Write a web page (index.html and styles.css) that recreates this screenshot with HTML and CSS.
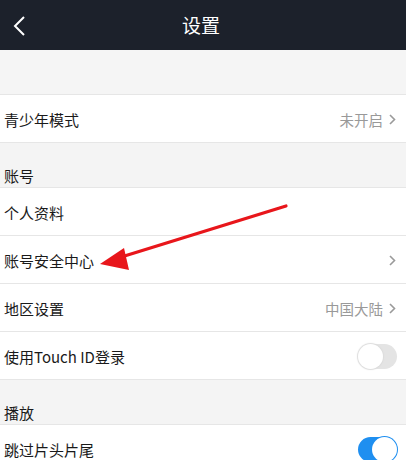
FILE: index.html
```html
<!DOCTYPE html>
<html lang="zh">
<head>
<meta charset="utf-8">
<link rel="stylesheet" href="styles.css">
</head>
<body>
<div class="screen">
  <header class="topbar">
    <svg class="back" width="14" height="22" viewBox="0 0 14 22"><path d="M11 2 L2 11 L11 20" fill="none" stroke="#fff" stroke-width="2"/></svg>
    <div class="title">设置</div>
  </header>
  <div class="spacer"></div>
  <div class="row"><span class="label">青少年模式</span><span class="value">未开启<svg class="chev" width="7" height="11" viewBox="0 0 7 11"><path d="M1 1 L5.5 5.5 L1 10" fill="none" stroke="#9a9a9a" stroke-width="1.6"/></svg></span></div>
  <div class="section">账号</div>
  <div class="row"><span class="label">个人资料</span></div>
  <div class="row"><span class="label">账号安全中心</span><span class="value"><svg class="chev" width="7" height="11" viewBox="0 0 7 11"><path d="M1 1 L5.5 5.5 L1 10" fill="none" stroke="#9a9a9a" stroke-width="1.6"/></svg></span></div>
  <div class="row"><span class="label">地区设置</span><span class="value">中国大陆<svg class="chev" width="7" height="11" viewBox="0 0 7 11"><path d="M1 1 L5.5 5.5 L1 10" fill="none" stroke="#9a9a9a" stroke-width="1.6"/></svg></span></div>
  <div class="row"><span class="label">使用Touch ID登录</span><span class="toggle"><span class="knob"></span></span></div>
  <div class="section">播放</div>
  <div class="row"><span class="label">跳过片头片尾</span><span class="toggle on"><span class="knob"></span></span></div>
  <svg class="arrow" width="406" height="460" viewBox="0 0 406 460">
    <line x1="286" y1="206" x2="118" y2="258" stroke="#e8161b" stroke-width="3.2" stroke-linecap="round"/>
    <polygon points="100,264 124,248 129,270" fill="#e8161b"/>
  </svg>
</div>
</body>
</html>
```
FILE: styles.css
```css
html, body { margin: 0; padding: 0; }
body {
  width: 406px; height: 460px; overflow: hidden;
  background: #f4f4f4;
  font-family: "Noto Sans CJK SC", "Noto Sans", sans-serif;
}
.screen { position: relative; width: 406px; height: 460px; overflow: hidden; }
.topbar {
  height: 50px; background: #1c212b; position: relative;
  display: flex; align-items: center; justify-content: center;
}
.back { position: absolute; left: 13px; top: 15px; }
.title { color: #fff; font-size: 19px; line-height: 24px; margin-right: 4px; }
.spacer { height: 44px; border-bottom: 1px solid #e6e6e6; background: #f5f5f5; }
.row {
  height: 48px; background: #fff; border-bottom: 1px solid #e6e6e6;
  display: flex; align-items: center; justify-content: space-between;
  padding: 2px 9px 0 4px; box-sizing: border-box;
}
.label { font-size: 15px; color: #1a1a1a; }
.value { font-size: 14.5px; color: #999; display: flex; align-items: center; }
.chev { margin-left: 6px; margin-right: 1px; }
.section {
  height: 45px; background: #f4f4f4; border-bottom: 1px solid #e6e6e6;
  font-size: 15px; color: #1a1a1a; padding-left: 4px;
  display: flex; align-items: flex-end; line-height: 22px; box-sizing: border-box;
  padding-bottom: 0;
}
.toggle {
  width: 39px; height: 25px; border-radius: 13px; background: #e4e4e4;
  position: relative; box-sizing: border-box;
}
.toggle .knob {
  position: absolute; left: 0; top: 0; width: 25px; height: 25px; border-radius: 50%;
  background: #fff; box-shadow: 0 0 1px 1px #dcdcdc;
}
.toggle.on { background: #1f8ff0; }
.toggle.on .knob { left: auto; right: 0; box-shadow: 0 0 0 1px #1f8ff0; }
.arrow { position: absolute; left: 0; top: 0; }
```
